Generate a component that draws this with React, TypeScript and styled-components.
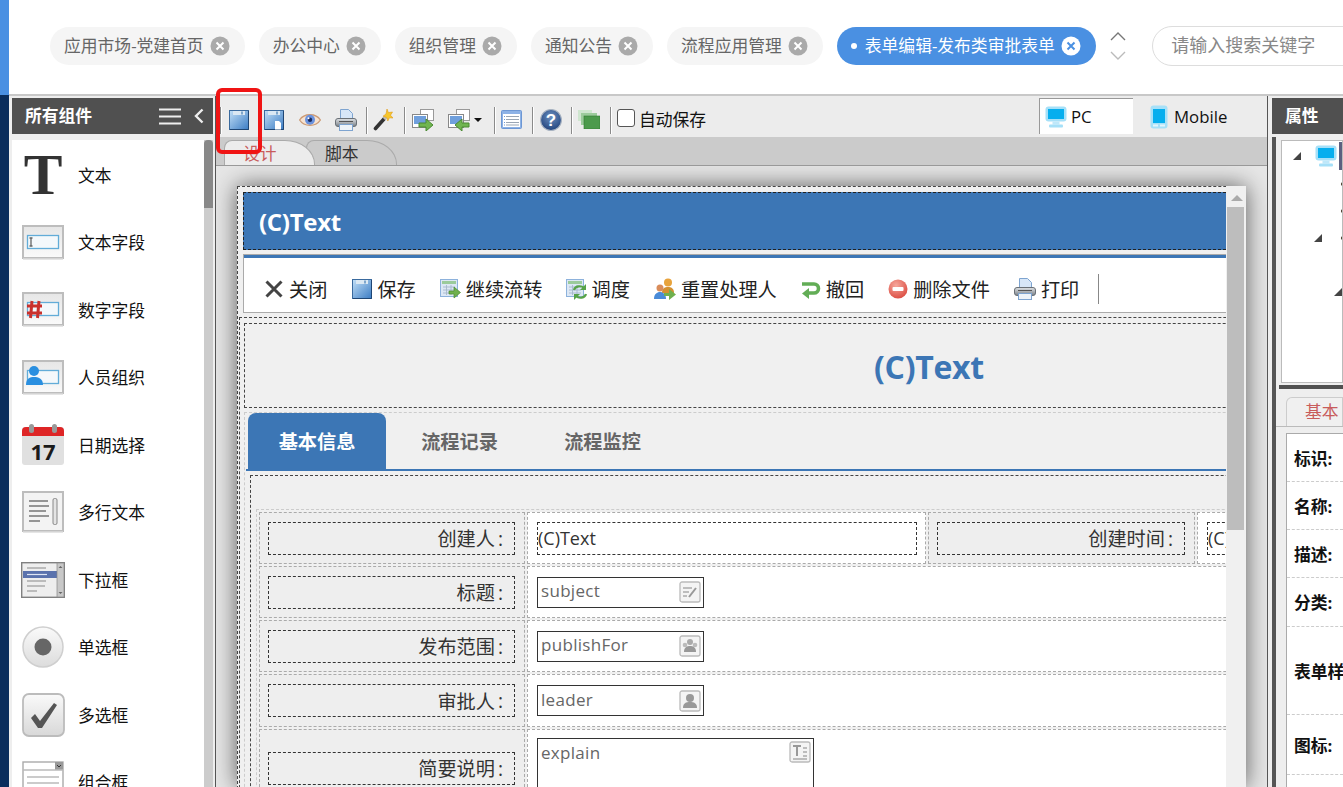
import React from "react";
import styled, { createGlobalStyle } from "styled-components";

const Global = createGlobalStyle`
  html, body { margin: 0; padding: 0; background: #fff; overflow: hidden; }
  * { box-sizing: border-box; }
  body { font-family: "Open Sans", "Noto Sans CJK SC", sans-serif; font-size: 16.8px; color: #111; }
`;

const BLUE = "#3c76b5";

const Page = styled.div`display: flex; width: 1343px; height: 787px; overflow: hidden; position: relative;`;
const Strip = styled.div`width: 9px; flex: none; display: flex; flex-direction: column;`;
const StripTop = styled.div`height: 95px; background: #4a90e2;`;
const StripBottom = styled.div`flex: 1; background: #0a2d5c;`;
const Content = styled.div`flex: 1; min-width: 0; display: flex; flex-direction: column;`;

const TopBar = styled.header`
  height: 96px; flex: none; display: flex; align-items: center; padding: 0 0 2px 41px;
  border-bottom: 2px solid #c8c8c8; background: #fff; overflow: hidden;
`;
const Pills = styled.div`display: flex; gap: 14px; flex: none;`;
const Pill = styled.div<{ $active?: boolean }>`
  height: 38px; display: flex; align-items: center; gap: 6px; border-radius: 19px; white-space: nowrap;
  padding: 0 ${(p) => (p.$active ? "15.5px" : "15px")} 0 14px;
  background: ${(p) => (p.$active ? "#4a90e2" : "#f5f5f5")};
  color: ${(p) => (p.$active ? "#fff" : "#666")};
`;
const PillLabel = styled.span`margin-bottom: 2px;`;
const PillDot = styled.span`width: 6px; height: 6px; border-radius: 50%; background: #fff; margin-right: 2px; flex: none;`;
const Arrows = styled.div`flex: none; margin-left: 14px; width: 16px; display: flex; flex-direction: column; gap: 10px; align-items: center;`;
const Search = styled.input`
  flex: none; margin-left: 26px; width: 300px; height: 40px; border: 1px solid #ddd; border-radius: 20px;
  padding: 0 18px 3px; font: inherit; font-size: 18px; background: #fff; outline: none;
  &::placeholder { color: #888; opacity: 1; }
`;

const Workspace = styled.div`flex: 1; min-height: 0; display: flex; background: #eee;`;

const Palette = styled.aside`width: 206px; flex: none; padding: 2px 2px 0 3px; display: flex; flex-direction: column; background: #eee;`;
const PanelHeader = styled.div`
  height: 36px; flex: none; background: #505050; color: #fff; font-weight: 700; display: flex; align-items: center; padding: 0 0 2px 13px;
`;
const HeaderTools = styled.div`margin-left: auto; display: flex; align-items: center; gap: 13px; padding: 2px 9px 0 0;`;
const PaletteBody = styled.div`flex: 1; min-height: 0; display: flex; margin-top: 6px;`;
const PaletteList = styled.div`width: 192px; flex: none; background: #fff; padding-top: 1px; overflow: hidden;`;
const PaletteItem = styled.div`height: 67.5px; display: flex; align-items: center; padding-left: 9px; color: #111; white-space: nowrap;`;
const PaletteIcon = styled.div`width: 44px; flex: none; display: flex; justify-content: center; margin-right: 13px;`;
const BigT = styled.span`font-family: "Liberation Serif", serif; font-weight: 700; font-size: 58px; line-height: 42px; color: #333;`;
const Scroll = styled.div`width: 9px; flex: none; background: #ccc;`;
const ScrollThumb = styled.div`height: 68px; background: #888; border-radius: 4px 4px 0 0;`;

const Main = styled.main`
  width: 1053px; flex: none; display: flex; flex-direction: column; min-width: 0;
  border-left: 1px solid #555; border-right: 1px solid #555;
`;
const Toolbar = styled.div`height: 41px; flex: none; display: flex; background: #ececec;`;
const Tools = styled.div`flex: 1; display: flex; align-items: center; padding: 6px 0 0 0; min-width: 0;`;
const Tool = styled.span<{ $ml: number }>`display: flex; flex: none; margin-left: ${(p) => p.$ml}px;`;
const ToolSep = styled.span<{ $ml: number }>`width: 1px; height: 27px; background: #8a8a8a; flex: none; margin-left: ${(p) => p.$ml}px; margin-top: 1px; box-shadow: 1px 0 0 #fff;`;
const Caret = styled.span<{ $ml: number }>`
  margin-left: ${(p) => p.$ml}px; width: 0; height: 0; flex: none; border-left: 4px solid transparent; border-right: 4px solid transparent; border-top: 4px solid #111;
`;
const Check = styled.input`
  appearance: none; width: 18px; height: 18px; margin: -3px 0 0 6px; border: 1px solid #555; border-radius: 3px; background: #fff; flex: none;
`;
const CheckLabel = styled.label`margin-left: 4px; color: #111; white-space: nowrap; line-height: 24px;`;
const Modes = styled.div`display: flex; flex: none; margin: 2px 40px 3px 0;`;
const Mode = styled.div<{ $active?: boolean }>`
  width: 94px; display: flex; align-items: center; gap: ${(p) => (p.$active ? "4px" : "6px")}; padding-left: ${(p) => (p.$active ? "5px" : "16px")}; color: #111;
  background: ${(p) => (p.$active ? "#fff" : "transparent")};
  border-top: 1px solid ${(p) => (p.$active ? "#999" : "transparent")};
  border-left: 1px solid ${(p) => (p.$active ? "#999" : "transparent")};
`;

const TabStrip = styled.div`height: 29px; flex: none; background: #cbcbcb; border-bottom: 1px solid #999; display: flex; align-items: flex-end; padding-left: 8px;`;
const FileTab = styled.div<{ $active?: boolean }>`
  width: 91px; height: 25px; padding: 0 0 0 18px; line-height: 26px; flex: none; position: relative;
  margin-left: ${(p) => (p.$active ? 0 : "-9px")}; z-index: ${(p) => (p.$active ? 1 : 0)};
  border: 1px solid #aaa; border-bottom: none; border-radius: 8px 30px 0 0 / 8px 24px 0 0;
  background: ${(p) => (p.$active ? "#ececec" : "#cbcbcb")};
  color: ${(p) => (p.$active ? "#c85c5c" : "#333")};
`;
const Canvas = styled.div`flex: 1; min-height: 0; display: flex; padding: 20px 21px 0 21px; background: #e6e6e6; overflow: hidden;`;
const Form = styled.div`flex: 1; min-width: 0; display: flex; background: #f0f0f0; box-shadow: 0 0 22px rgba(0, 0, 0, 0.6);`;
const FormView = styled.div`flex: 1; min-width: 0; overflow: hidden;`;
const FormScrollbar = styled.div`width: 20px; flex: none; background: #f0f0f0; padding-left: 1px;`;
const BarArrow = styled.div`height: 21px; display: flex; align-items: center; justify-content: center; padding-top: 2px;`;
const BarTriangle = styled.span`width: 0; height: 0; border-left: 6px solid transparent; border-right: 6px solid transparent; border-bottom: 6px solid #aaa;`;
const BarThumb = styled.div`width: 17px; height: 323px; background: #bdbdbd;`;

const Dash = styled.div`width: 1500px; border: 1px dashed #444; padding: 5px;`;
const FormHeader = styled.div`
  height: 58px; display: flex; align-items: center; padding-left: 15px; background: ${BLUE}; border: 1px dashed #222;
  color: #fff; font-weight: 700; font-size: 24px; letter-spacing: -0.3px;
`;
const ActionBar = styled.div`
  height: 59px; margin-top: 4px; display: flex; align-items: center; padding: 11px 0 0 20px; background: #fff;
  border: 1px solid #aaa; box-shadow: inset 0 3px 0 ${BLUE}; font-size: 19.2px; color: #222;
`;
const Action = styled.div`
  display: flex; align-items: center; gap: 5px; margin-right: 24px; white-space: nowrap; flex: none;
  &:nth-child(1) { margin-right: 25px; }
  &:nth-child(3) { margin-right: 23px; }
`;
const ActionSep = styled.span`width: 1px; height: 30px; background: #888; margin: -1px 0 0 -5px; flex: none;`;
const Section = styled.div`margin: 4px 0 0 -4px; border: 1px dashed #444; padding: 5px 0 0 4px;`;
const TitleBox = styled.div`
  height: 85px; border: 1px dashed #444; display: flex; align-items: center; padding: 1px 0 0 629px; color: ${BLUE}; font-size: 32px; font-weight: 700; letter-spacing: -0.3px;
`;
const TabsWrap = styled.div`margin-top: 4px; border: 1px dashed #ccc; padding: 0 0 0 1px;`;
const TabBar = styled.div`display: flex; height: 58px; border-bottom: 2px solid ${BLUE}; padding-left: 2px;`;
const FormTab = styled.div<{ $active?: boolean }>`
  height: 56px; display: flex; align-items: center; justify-content: center; font-size: 19.2px; font-weight: 700; white-space: nowrap; flex: none;
  width: ${(p) => (p.$active ? "138px" : "143px")};
  background: ${(p) => (p.$active ? BLUE : "transparent")};
  color: ${(p) => (p.$active ? "#fff" : "#666")};
  border-radius: ${(p) => (p.$active ? "8px 8px 0 0" : "0")};
`;
const TabGap = styled.span`width: 2px; flex: none;`;
const TabPanel = styled.div`margin: 4px 0 0 4px; border: 1px dashed #444; padding: 33px 0 0 5px;`;
const Grid = styled.div`
  width: fit-content; display: grid; gap: 2px; padding: 2px; border: 1px dashed #ccc;
  grid-template-columns: 266px 399px 267px 400px;
  grid-template-rows: 52px 52px 52px 53px 78px;
`;
const LabelCell = styled.div`border: 1px dashed #aaa; background: #eee; padding: 0 9px 0 8px; display: flex; align-items: center;`;
const LabelBox = styled.div`
  flex: 1; height: 33px; border: 1px dashed #333; display: flex; align-items: center; justify-content: flex-end; padding: 0 11px 0 0;
  font-size: 19.2px; color: #333; white-space: nowrap;
`;
const Colon = styled.span`margin-left: 3px;`;
const ValueCell = styled.div<{ $span?: boolean }>`
  border: 1px dashed #aaa; background: #fff; padding: 0 8px 0 9px; display: flex; align-items: center; overflow: hidden;
  grid-column: ${(p) => (p.$span ? "2 / -1" : "auto")};
`;
const ValueBox = styled.div`flex: 1; height: 33px; border: 1px dashed #333; display: flex; align-items: center; font-size: 18px; color: #333; white-space: nowrap;`;
const InputBox = styled.div`
  width: 167px; height: 31px; flex: none; border: 1px solid #333; background: #fff; display: flex; align-items: center; justify-content: space-between;
  padding: 0 2px 0 3px; color: #666; font-size: 17px; letter-spacing: 0.3px;
`;
const InputText = styled.span`margin-bottom: 3px;`;
const AreaCell = styled(ValueCell)`align-items: flex-start; padding-top: 8px;`;
const AreaBox = styled(InputBox)`width: 277px; height: 80px; align-items: flex-start; padding-top: 2px;`;

const Props = styled.aside`flex: 1; min-width: 0; padding: 2px 0 0 4px; display: flex; flex-direction: column; background: #eee; overflow: hidden;`;
const PropsBody = styled.div`flex: 1; min-height: 0; display: flex; margin-top: 3px;`;
const PropsEdge = styled.div`width: 4px; flex: none; background: #555;`;
const PropsColumn = styled.div`flex: 1; min-width: 0; display: flex; flex-direction: column;`;
const Tree = styled.div`height: 243px; flex: none; margin: 3px 0 0 5px; border: 1px solid #bbb; background: #fff; overflow: hidden; padding-top: 1px;`;
const TreeRow = styled.div<{ $indent: number; $tall?: boolean }>`height: ${(p) => (p.$tall ? "28px" : "27px")}; display: flex; align-items: center; padding-left: ${(p) => p.$indent}px;`;
const TreeMark = styled.span<{ $ml?: number }>`width: 4px; height: 4px; border-radius: 50%; background: #432; margin-left: ${(p) => p.$ml ?? 0}px; flex: none;`;
const ToggleGap = styled.span`width: 14px; flex: none;`;
const TreeSelected = styled.span`flex: 1; height: 28px; background: #5c6080; margin-left: 2px;`;
const PropsDivider = styled.div`height: 4px; flex: none; margin: 2px 0 0 3px; background: #505050;`;
const PropTabs = styled.div`height: 38px; flex: none; border-bottom: 1px solid #bbb; padding: 8px 0 0 10px;`;
const PropTab = styled.div`
  height: 29px; border: 1px solid #ccc; border-bottom: none; border-radius: 6px 0 0 0; padding-left: 18px; color: #c85c5c; line-height: 28px; white-space: nowrap; background: #f0f0f0;
`;
const PropTable = styled.div`margin: 6px 0 0 10px; border-left: 1px solid #aaa; border-top: 1px solid #aaa; background: #fff; flex: 1; min-height: 0; overflow: hidden;`;
const PropRow = styled.div<{ $h: number }>`
  height: ${(p) => p.$h}px; border-bottom: 1px dashed #ccc; display: flex; align-items: center; padding-left: 7px; font-weight: 700; color: #111; white-space: nowrap;
`;
const Highlight = styled.div`
  position: absolute; z-index: 5; left: 216px; top: 88px; width: 46px; height: 66px; border: 4px solid #f01414; border-radius: 6px; pointer-events: none;
`;

/* ---------- drawings ---------- */
const Close = ({ active }: { active?: boolean }) => (
  <svg width="20" height="20" viewBox="0 0 20 20" style={{ flex: "none" }}>
    <circle cx="10" cy="10" r="9.5" fill={active ? "#fff" : "#aaa"} />
    <path d="M6.5 6.5l7 7M13.500 6.500l-7 7" stroke={active ? "#4a90e2" : "#fff"} strokeWidth="2" />
  </svg>
);
const Chevron = ({ up, color }: { up?: boolean; color: string }) => (
  <svg width="16" height="9" viewBox="0 0 16 9">
    <path d={up ? "M1 8l7-7 7 7" : "M1 1l7 7 7-7"} fill="none" stroke={color} strokeWidth="1.4" />
  </svg>
);
const Menu = () => (
  <svg width="22" height="17" viewBox="0 0 22 17"><path d="M0 1.500h22M0 8.500h22M0 15.500h22" stroke="#eee" strokeWidth="2.200" /></svg>
);
const Back = () => (
  <svg width="10" height="16" viewBox="0 0 10 16"><path d="M8.500 1.500L2 8l6.500 6.500" fill="none" stroke="#eee" strokeWidth="2.400" /></svg>
);
const Floppy = ({ note }: { note?: boolean }) => (
  <svg width="20" height="20" viewBox="0 0 20 20" style={{ flex: "none" }}>
    <defs><linearGradient id="fl" x1="0" y1="0" x2="1" y2="1"><stop offset="0" stopColor="#c3e0f7" /><stop offset="1" stopColor="#3b7cc4" /></linearGradient></defs>
    <rect x="0.500" y="0.500" width="19" height="19" fill="url(#fl)" stroke="#3a6a9e" />
    <path d="M19.500 1v18.500H1" fill="none" stroke="#1f4674" />
    <rect x="4" y="1" width="12" height="4" fill="#dbe8f3" />
    <rect x="12" y="1.500" width="2" height="3" fill="#7ea6cc" />
    {note && <path d="M11 11h4l2 2v6.500h-6z" fill="#fff" />}
  </svg>
);
const Eye = () => (
  <svg width="22" height="16" viewBox="0 0 22 16">
    <path d="M.6 8C5 1 17 1 21.400 8 17 15 5 15 .6 8Z" fill="#f6e2d0" stroke="#cc9a74" strokeWidth="1.300" />
    <circle cx="11" cy="7.800" r="5" fill="#6a92de" />
    <circle cx="11" cy="7.800" r="2.200" fill="#1c2c5c" />
    <circle cx="9.500" cy="6.200" r="1" fill="#fff" />
  </svg>
);
const Printer = () => (
  <svg width="22" height="22" viewBox="0 0 22 22" style={{ flex: "none" }}>
    <defs><linearGradient id="pr" x1="0" y1="0" x2="0" y2="1"><stop offset="0" stopColor="#e0e3e6" /><stop offset="1" stopColor="#787f86" /></linearGradient></defs>
    <path d="M5.500 .5h8l4 4v8h-12z" fill="#d7e6f7" stroke="#7ea4d0" />
    <rect x=".5" y="9.500" width="21" height="8" rx="2.500" fill="url(#pr)" stroke="#6a7076" />
    <rect x="4.500" y="15.500" width="13" height="6" fill="#eef3f8" stroke="#7ea4d0" />
    <rect x="4" y="12" width="14" height="1" fill="#555" />
  </svg>
);
const Wand = () => (
  <svg width="20" height="22" viewBox="0 0 20 22">
    <path d="M2.500 19.500L11 10" stroke="#333" strokeWidth="3.600" strokeLinecap="round" />
    <path d="M11 10l2-2" stroke="#bbb" strokeWidth="3.600" />
    <path d="M14 0l1.400 3.600L19.500 3l-2 3.200L20 9l-3.600-.2L14.800 12l-1.100-3.500L10 7.200l3-2.200Z" fill="#f6c62c" stroke="#e09a1a" strokeWidth=".6" />
  </svg>
);
const Flow = ({ left }: { left?: boolean }) => (
  <svg width="22" height="22" viewBox="0 0 22 22">
    <rect x="8.500" y=".5" width="13" height="11" fill="#fff" stroke="#999" />
    <rect x=".5" y="5.500" width="15" height="13" fill="#fff" stroke="#888" />
    <rect x="2" y="7" width="12" height="8" fill="#6f9fdc" />
    <path d={left ? "M21 14h-7v-4l-7 6 7 6v-4h7z" : "M7 14h7v-4l7 6-7 6v-4H7z"} fill="#70b550" stroke="#4a8a32" />
  </svg>
);
const ListWin = () => (
  <svg width="21" height="19" viewBox="0 0 21 19">
    <rect x=".5" y=".5" width="20" height="18" rx="1" fill="#8db2e6" stroke="#6d97d4" />
    <rect x="2" y="4" width="17" height="13" fill="#fff" />
    <path d="M5 6.500h13M5 9.500h13M5 12.500h13M5 15h13" stroke="#9aa6b4" />
    <path d="M3 6.500h1M3 9.500h1M3 12.500h1M3 15h1" stroke="#6d97d4" />
  </svg>
);
const Help = () => (
  <svg width="22" height="22" viewBox="0 0 22 22">
    <defs><radialGradient id="hp" cx=".5" cy=".35" r=".7"><stop offset="0" stopColor="#6c90c0" /><stop offset="1" stopColor="#1d3e78" /></radialGradient></defs>
    <circle cx="11" cy="11" r="10.500" fill="url(#hp)" stroke="#a9b4c2" strokeWidth="1.200" />
    <text x="11" y="17" textAnchor="middle" fontSize="17" fontWeight="700" fill="#fff" fontFamily="Liberation Sans, sans-serif">?</text>
  </svg>
);
const Layers = () => (
  <svg width="22" height="19" viewBox="0 0 22 19">
    <rect x="0" y="0" width="14" height="11" fill="#cfe6cf" />
    <rect x="3" y="3" width="16" height="12" fill="#9ccb9c" />
    <rect x="6" y="6" width="16" height="13" fill="#4c9a4c" stroke="#2f7a2f" strokeWidth=".6" />
  </svg>
);
const Monitor = () => (
  <svg width="22" height="22" viewBox="0 0 22 22" style={{ flex: "none" }}>
    <rect x=".5" y=".5" width="21" height="15" rx="3" fill="#a6e0f8" />
    <rect x="3" y="3" width="16" height="10" fill="#06aeee" />
    <rect x="7.500" y="15.500" width="7" height="3" fill="#bfe8fa" />
    <rect x="4" y="18.500" width="14" height="3" rx="1" fill="#a6e0f8" />
  </svg>
);
const Phone = () => (
  <svg width="18" height="24" viewBox="0 0 18 24" style={{ flex: "none" }}>
    <rect x=".5" y=".5" width="17" height="23" rx="3" fill="#a6e0f8" />
    <rect x="3" y="4" width="12" height="14" fill="#06aeee" />
    <rect x="3" y="19.500" width="5" height="2" fill="#e2f5fd" />
    <rect x="10" y="19.500" width="5" height="2" fill="#e2f5fd" />
  </svg>
);
const Toggle = () => (
  <svg width="8" height="8" viewBox="0 0 8 8" style={{ flex: "none" }}><path d="M8 0v8H0z" fill="#444" /></svg>
);

const Frame = ({ children }: { children: React.ReactNode }) => (
  <svg width="42" height="35" viewBox="0 0 42 35">
    <defs><linearGradient id="fr" x1="0" y1="0" x2="0" y2="1"><stop offset="0" stopColor="#e6e6e6" /><stop offset="1" stopColor="#fafafa" /></linearGradient></defs>
    <rect x="1" y="1" width="40" height="32" fill="url(#fr)" stroke="#bdbdbd" strokeWidth="2" />
    <path d="M1 34h40" stroke="#ddd" strokeWidth="1.500" />
    <rect x="5.500" y="10.500" width="31" height="13" fill="#f4f8fb" stroke="#62acd8" strokeWidth="1.300" />
    {children}
  </svg>
);
const TextFieldIcon = () => (
  <Frame><path d="M7.500 13h3M7.500 21h3M9 13v8" stroke="#666" strokeWidth="1.300" /></Frame>
);
const NumberIcon = () => (
  <Frame><path d="M10 9l-1.500 17M17 9l-1.500 17M5 14h15M5 21h15" stroke="#c9302c" strokeWidth="3" fill="none" /></Frame>
);
const PersonIcon = () => (
  <Frame>
    <circle cx="12" cy="11" r="5" fill="#2a8fe0" />
    <path d="M4 25c0-7 4-8 8-8s9 1 9 8z" fill="#2a8fe0" />
  </Frame>
);
const CalendarIcon = () => (
  <svg width="44" height="42" viewBox="0 0 44 42">
    <rect x="1" y="3" width="42" height="38" rx="3" fill="#e0e0e0" />
    <path d="M1 12V7a4 4 0 014-4h34a4 4 0 014 4v5z" fill="#de2526" />
    <rect x="8" y="0" width="5" height="9" rx="2.500" fill="#999" />
    <rect x="31" y="0" width="5" height="9" rx="2.500" fill="#999" />
    <text x="22" y="36" textAnchor="middle" fontSize="22" fontWeight="700" fill="#1a1a1a" fontFamily="Open Sans, sans-serif">17</text>
  </svg>
);
const MultiIcon = () => (
  <svg width="42" height="42" viewBox="0 0 42 42">
    <rect x="1" y="1" width="40" height="39" fill="#f3f3f3" stroke="#bdbdbd" strokeWidth="2" />
    <path d="M1 41h40" stroke="#ddd" strokeWidth="1.500" />
    <path d="M7 10h19M7 15h20M7 20h17M7 25h20M7 30h11" stroke="#777" strokeWidth="1.400" />
    <rect x="31" y="7.500" width="4" height="26" rx="1.500" fill="#e4e4e4" stroke="#888" />
  </svg>
);
const SelectIcon = () => (
  <svg width="44" height="36" viewBox="0 0 44 36">
    <rect x=".7" y=".7" width="42.600" height="34.600" fill="#eee" stroke="#808080" strokeWidth="1.400" />
    <rect x="2" y="9" width="34" height="7" fill="#5a72ad" />
    <path d="M6 6h19M6 12.500h20M6 19h19M6 24h18M6 29h10" stroke="#888" strokeWidth="1.200" />
    <path d="M6 12.500h20" stroke="#dfe6f4" strokeWidth="1.200" />
    <rect x="36" y="1" width="7" height="34" fill="#c8c8c8" stroke="#888" strokeWidth=".7" />
    <path d="M37.500 6l2-2 2 2zM37.500 30l2 2 2-2z" fill="#666" />
  </svg>
);
const RadioIcon = () => (
  <svg width="42" height="42" viewBox="0 0 42 42">
    <defs><linearGradient id="ra" x1="0" y1="0" x2="0" y2="1"><stop offset="0" stopColor="#fafafa" /><stop offset="1" stopColor="#dcdcdc" /></linearGradient></defs>
    <circle cx="21" cy="21" r="20" fill="url(#ra)" stroke="#cfcfcf" strokeWidth="1.500" />
    <circle cx="21" cy="21" r="8.500" fill="#666" />
  </svg>
);
const CheckIcon = () => (
  <svg width="43" height="44" viewBox="0 0 43 44">
    <defs><linearGradient id="ck" x1="0" y1="0" x2="0" y2="1"><stop offset="0" stopColor="#fafafa" /><stop offset="1" stopColor="#d8d8d8" /></linearGradient></defs>
    <rect x="1" y="1" width="41" height="42" rx="6" fill="url(#ck)" stroke="#bcbcbc" strokeWidth="1.800" />
    <path d="M9 25l4-4 5 7L32 10l3 2-15 23h-4z" fill="#555" />
  </svg>
);
const ComboIcon = () => (
  <svg width="42" height="42" viewBox="0 0 42 42">
    <rect x="1" y="1" width="40" height="40" fill="#fff" stroke="#aaa" strokeWidth="1.400" />
    <rect x="33" y="1" width="8" height="8" fill="#999" />
    <path d="M35 4l2 2 2-2" stroke="#333" fill="none" />
    <path d="M1 9h40M5 16h32M5 22h32M5 28h32" stroke="#bbb" strokeWidth="1.400" />
  </svg>
);

const CloseAction = () => (
  <svg width="20" height="20" viewBox="0 0 20 20" style={{ flex: "none" }}>
    <path d="M2.500 2.500l15 15M17.500 2.500l-15 15" stroke="#444" strokeWidth="3" />
  </svg>
);
const TableWin = ({ children }: { children: React.ReactNode }) => (
  <svg width="21" height="21" viewBox="0 0 21 21" style={{ flex: "none" }}>
    <rect x=".5" y=".5" width="17" height="17" fill="#dde8f5" stroke="#8db2dc" />
    <rect x="2" y="2" width="14" height="3" fill="#9bcb9b" />
    <path d="M3 8h12M3 11h12M3 14h12M6.500 6v10M11 6v10" stroke="#a6b8cc" strokeWidth=".9" />
    {children}
  </svg>
);
const ContinueIcon = () => (
  <TableWin><path d="M9 12h5V8l6.500 5.500L14 19v-4H9z" fill="#6fb04e" stroke="#4a8a32" strokeWidth=".7" /></TableWin>
);
const DispatchIcon = () => (
  <TableWin>
    <path d="M8 11c1-4 7-5 10-2" fill="none" stroke="#57a348" strokeWidth="2.200" />
    <path d="M20 5v6h-6z" fill="#57a348" />
    <path d="M20 15c-1 4-7 5-10 2" fill="none" stroke="#57a348" strokeWidth="2.200" />
    <path d="M8 21v-6h6z" fill="#57a348" />
  </TableWin>
);
const ResetIcon = () => (
  <svg width="22" height="22" viewBox="0 0 22 22" style={{ flex: "none" }}>
    <circle cx="14" cy="4.500" r="4" fill="#e8a33c" />
    <path d="M8 15c0-5 3-6 6-6s6 1 6 6z" fill="#d49030" />
    <circle cx="6" cy="10" r="3.500" fill="#d98c5a" />
    <path d="M0 21c0-5 3-7 6-7s6 2 6 7z" fill="#4a8bd8" />
    <path d="M10 15h5v-4l7 5.500-7 5.500v-4h-5z" fill="#6fb04e" />
  </svg>
);
const UndoIcon = () => (
  <svg width="20" height="20" viewBox="0 0 20 20" style={{ flex: "none" }}>
    <path d="M1 5h12a4.500 4.500 0 010 9H6" fill="none" stroke="#62ad56" strokeWidth="3.600" />
    <path d="M8 9l-7 5.500L8 20z" fill="#62ad56" />
  </svg>
);
const RemoveIcon = () => (
  <svg width="20" height="20" viewBox="0 0 20 20" style={{ flex: "none" }}>
    <defs><radialGradient id="rm" cx=".4" cy=".3" r=".8"><stop offset="0" stopColor="#f6a79c" /><stop offset="1" stopColor="#d9453a" /></radialGradient></defs>
    <circle cx="10" cy="10" r="9.500" fill="url(#rm)" />
    <rect x="4.500" y="8" width="11" height="4" rx="1" fill="#fff" />
  </svg>
);

const FieldIcon = ({ children }: { children: React.ReactNode }) => (
  <svg width="22" height="22" viewBox="0 0 22 22" style={{ flex: "none" }}>
    <rect x="1" y="1" width="20" height="20" rx="2" fill="#f4f4f4" stroke="#bbb" strokeWidth="1.300" />
    {children}
  </svg>
);
const SubjectGlyph = () => (
  <FieldIcon><path d="M4 7h9M4 11h6M4 15h4" stroke="#aaa" strokeWidth="1.500" /><path d="M10 16L17 7" stroke="#999" strokeWidth="2" /></FieldIcon>
);
const GroupGlyph = () => (
  <FieldIcon>
    <circle cx="11" cy="7" r="3" fill="#aaa" /><circle cx="6" cy="10" r="2.300" fill="#bbb" /><circle cx="16" cy="10" r="2.300" fill="#bbb" />
    <path d="M5 17c0-5 3-6 6-6s6 1 6 6z" fill="#999" />
  </FieldIcon>
);
const PersonGlyph = () => (
  <FieldIcon><circle cx="11" cy="8" r="4" fill="#999" /><path d="M4 18c0-5 3-6 7-6s7 1 7 6z" fill="#999" /></FieldIcon>
);
const AreaGlyph = () => (
  <FieldIcon><path d="M4 5h8M8 5v10" stroke="#999" strokeWidth="2" /><path d="M14 7h4M14 11h4M14 15h4M4 18h14" stroke="#aaa" strokeWidth="1.400" /></FieldIcon>
);

const pills = ["应用市场-党建首页", "办公中心", "组织管理", "通知公告", "流程应用管理"];
const widgets: [React.ReactNode, string][] = [
  [<BigT>T</BigT>, "文本"],
  [<TextFieldIcon />, "文本字段"],
  [<NumberIcon />, "数字字段"],
  [<PersonIcon />, "人员组织"],
  [<CalendarIcon />, "日期选择"],
  [<MultiIcon />, "多行文本"],
  [<SelectIcon />, "下拉框"],
  [<RadioIcon />, "单选框"],
  [<CheckIcon />, "多选框"],
  [<ComboIcon />, "组合框"],
];
const actions: [React.ReactNode, string][] = [
  [<CloseAction />, "关闭"],
  [<Floppy />, "保存"],
  [<ContinueIcon />, "继续流转"],
  [<DispatchIcon />, "调度"],
  [<ResetIcon />, "重置处理人"],
  [<UndoIcon />, "撤回"],
  [<RemoveIcon />, "删除文件"],
  [<Printer />, "打印"],
];
const fields: [string, string, React.ReactNode][] = [
  ["标题", "subject", <SubjectGlyph />],
  ["发布范围", "publishFor", <GroupGlyph />],
  ["审批人", "leader", <PersonGlyph />],
];
const propRows: [number, string][] = [
  [48, "标识:"], [48, "名称:"], [48, "描述:"], [49, "分类:"], [88, "表单样式:"], [60, "图标:"], [40, ""],
];

export default function App() {
  return (
    <Page>
      <Global />
      <Strip><StripTop /><StripBottom /></Strip>
      <Content>
        <TopBar>
          <Pills>
            {pills.map((p) => (
              <Pill key={p}><PillLabel>{p}</PillLabel><Close /></Pill>
            ))}
            <Pill $active><PillDot /><PillLabel>表单编辑-发布类审批表单</PillLabel><Close active /></Pill>
          </Pills>
          <Arrows><Chevron up color="#777" /><Chevron color="#bbb" /></Arrows>
          <Search placeholder="请输入搜索关键字" />
        </TopBar>
        <Workspace>
          <Palette>
            <PanelHeader>
              所有组件
              <HeaderTools><Menu /><Back /></HeaderTools>
            </PanelHeader>
            <PaletteBody>
              <PaletteList>
                {widgets.map(([icon, name]) => (
                  <PaletteItem key={name}><PaletteIcon>{icon}</PaletteIcon>{name}</PaletteItem>
                ))}
              </PaletteList>
              <Scroll><ScrollThumb /></Scroll>
            </PaletteBody>
          </Palette>
          <Main>
            <Toolbar>
              <Tools>
                <ToolSep $ml={4} />
                <Tool $ml={8}><Floppy /></Tool>
                <Tool $ml={15}><Floppy note /></Tool>
                <Tool $ml={15}><Eye /></Tool>
                <Tool $ml={14}><Printer /></Tool>
                <ToolSep $ml={9} />
                <Tool $ml={6}><Wand /></Tool>
                <ToolSep $ml={11} />
                <Tool $ml={7}><Flow /></Tool>
                <Tool $ml={14}><Flow left /></Tool>
                <Caret $ml={4} />
                <ToolSep $ml={12} />
                <Tool $ml={6}><ListWin /></Tool>
                <ToolSep $ml={10} />
                <Tool $ml={7}><Help /></Tool>
                <ToolSep $ml={9} />
                <Tool $ml={6}><Layers /></Tool>
                <ToolSep $ml={10} />
                <Check type="checkbox" />
                <CheckLabel>自动保存</CheckLabel>
              </Tools>
              <Modes>
                <Mode $active><Monitor />PC</Mode>
                <Mode><Phone />Mobile</Mode>
              </Modes>
            </Toolbar>
            <TabStrip>
              <FileTab $active>设计</FileTab>
              <FileTab>脚本</FileTab>
            </TabStrip>
            <Canvas>
              <Form>
                <FormView>
                  <Dash>
                    <FormHeader>(C)Text</FormHeader>
                    <ActionBar>
                      {actions.map(([icon, name]) => (
                        <Action key={name}>{icon}{name}</Action>
                      ))}
                      <ActionSep />
                    </ActionBar>
                    <Section>
                      <TitleBox>(C)Text</TitleBox>
                      <TabsWrap>
                        <TabBar>
                          <FormTab $active>基本信息</FormTab>
                          <TabGap />
                          <FormTab>流程记录</FormTab>
                          <FormTab>流程监控</FormTab>
                        </TabBar>
                        <TabPanel>
                          <Grid>
                            <LabelCell><LabelBox>创建人<Colon>:</Colon></LabelBox></LabelCell>
                            <ValueCell><ValueBox>(C)Text</ValueBox></ValueCell>
                            <LabelCell><LabelBox>创建时间<Colon>:</Colon></LabelBox></LabelCell>
                            <ValueCell><ValueBox>(C)Text</ValueBox></ValueCell>
                            {fields.map(([label, value, icon]) => (
                              <React.Fragment key={value}>
                                <LabelCell><LabelBox>{label}<Colon>:</Colon></LabelBox></LabelCell>
                                <ValueCell $span><InputBox><InputText>{value}</InputText>{icon}</InputBox></ValueCell>
                              </React.Fragment>
                            ))}
                            <LabelCell><LabelBox>简要说明<Colon>:</Colon></LabelBox></LabelCell>
                            <AreaCell $span><AreaBox><InputText>explain</InputText><AreaGlyph /></AreaBox></AreaCell>
                          </Grid>
                        </TabPanel>
                      </TabsWrap>
                    </Section>
                  </Dash>
                </FormView>
                <FormScrollbar>
                  <BarArrow><BarTriangle /></BarArrow>
                  <BarThumb />
                </FormScrollbar>
              </Form>
            </Canvas>
          </Main>
          <Props>
            <PanelHeader>属性</PanelHeader>
            <PropsBody>
              <PropsEdge />
              <PropsColumn>
                <Tree>
                  <TreeRow $indent={11} $tall><Toggle /><ToggleGap /><Monitor /><TreeSelected /></TreeRow>
                  <TreeRow $indent={59}><TreeMark /></TreeRow>
                  <TreeRow $indent={59}><TreeMark /></TreeRow>
                  <TreeRow $indent={32}><Toggle /><TreeMark $ml={19} /></TreeRow>
                  <TreeRow $indent={32} />
                  <TreeRow $indent={52}><Toggle /></TreeRow>
                </Tree>
                <PropsDivider />
                <PropTabs><PropTab>基本</PropTab></PropTabs>
                <PropTable>
                  {propRows.map(([h, t], i) => (
                    <PropRow key={i} $h={h}>{t}</PropRow>
                  ))}
                </PropTable>
              </PropsColumn>
            </PropsBody>
          </Props>
        </Workspace>
      </Content>
      <Highlight />
    </Page>
  );
}
